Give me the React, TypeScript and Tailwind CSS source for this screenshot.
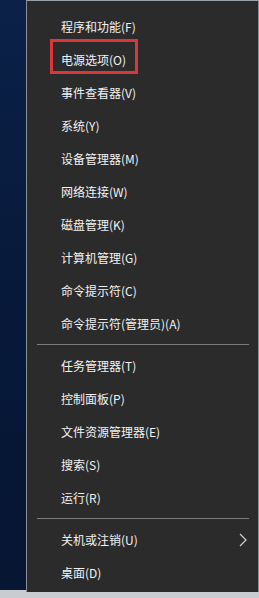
import React from 'react';

const groups: string[][] = [
  [
    '程序和功能(F)',
    '电源选项(O)',
    '事件查看器(V)',
    '系统(Y)',
    '设备管理器(M)',
    '网络连接(W)',
    '磁盘管理(K)',
    '计算机管理(G)',
    '命令提示符(C)',
    '命令提示符(管理员)(A)',
  ],
  ['任务管理器(T)', '控制面板(P)', '文件资源管理器(E)', '搜索(S)', '运行(R)'],
  ['关机或注销(U)', '桌面(D)'],
];

function MenuRow({ label, highlighted, submenu }: { label: string; highlighted?: boolean; submenu?: boolean }) {
  return (
    <div className="relative flex h-[33px] items-center pl-[34px] pr-[11px]">
      {highlighted && (
        <div className="pointer-events-none absolute left-[23px] top-[-4px] h-[35px] w-[88px] border-[3px] border-[#d8373b]" />
      )}
      <span className="flex-1 text-[12px] leading-none text-[#f2f2f2]">{label}</span>
      {submenu && (
        <svg width="8" height="14" viewBox="0 0 8 14" className="text-[#d0d0d0]">
          <path d="M1 1 L7 7 L1 13" fill="none" stroke="currentColor" strokeWidth="1.2" />
        </svg>
      )}
    </div>
  );
}

export default function App() {
  return (
    <div
      className="relative flex h-[598px] w-[259px] overflow-hidden bg-[#c9ccd1]"
      style={{ fontFamily: '"Microsoft YaHei", "Noto Sans CJK SC", "Noto Sans", sans-serif' }}
    >
      <div className="h-[590px] w-[26px] shrink-0 bg-gradient-to-b from-[#0b2148] via-[#07193a] to-[#061633]" />
      <div className="flex h-[592px] flex-1 flex-col border-l border-t border-r border-[#8d9095] border-t-[#9aa0a8] bg-[#2b2b2b] pt-[9px]">
        {groups.map((group, gi) => (
          <React.Fragment key={gi}>
            {gi > 0 && (
              <div className="flex h-[9px] items-center pl-[10px] pr-[9px]">
                <div className="h-px w-full bg-[#7b7b7b]" />
              </div>
            )}
            {group.map((label) => (
              <MenuRow
                key={label}
                label={label}
                highlighted={label === '电源选项(O)'}
                submenu={label === '关机或注销(U)'}
              />
            ))}
          </React.Fragment>
        ))}
      </div>
    </div>
  );
}
